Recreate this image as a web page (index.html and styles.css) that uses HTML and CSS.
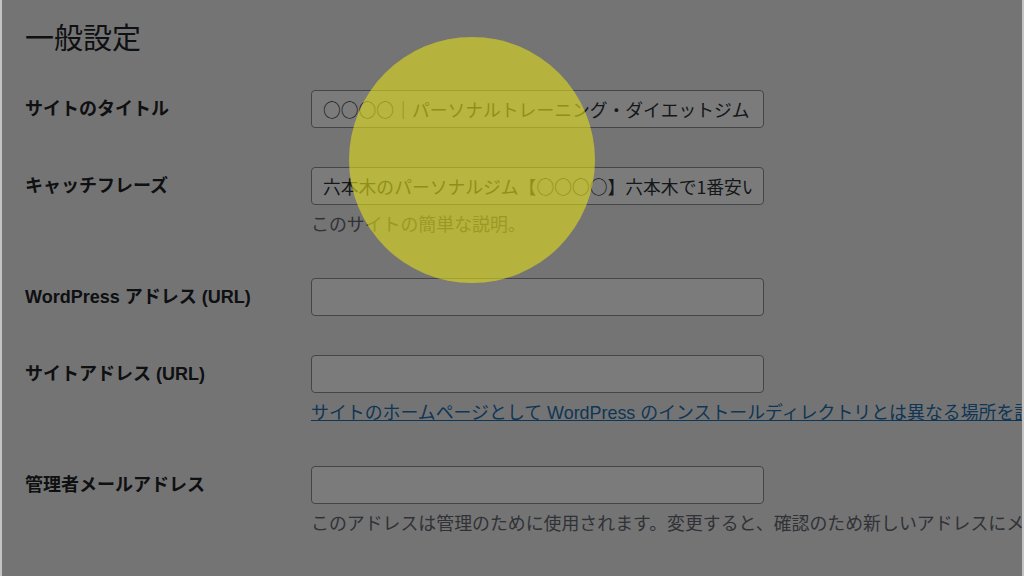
FILE: index.html
```html
<!DOCTYPE html>
<html lang="ja">

<head>
    <meta charset="UTF-8">
    <title>一般設定</title>
    <link rel="stylesheet" href="styles.css">
</head>

<body>
    <div class="frame">
        <div class="page">
            <h1>一般設定</h1>

            <div class="form-row">
                <label for="blogname">サイトのタイトル</label>
                <div class="field">
                    <input type="text" id="blogname" value="○○○○｜パーソナルトレーニング・ダイエットジム">
                </div>
            </div>

            <div class="form-row">
                <label for="blogdescription">キャッチフレーズ</label>
                <div class="field">
                    <input type="text" id="blogdescription" value="六本木のパーソナルジム【○○○○】六本木で1番安いパーソナルトレーニング">
                    <p class="description">このサイトの簡単な説明。</p>
                </div>
            </div>

            <div class="form-row">
                <label for="siteurl">WordPress アドレス (URL)</label>
                <div class="field">
                    <input type="url" id="siteurl">
                </div>
            </div>

            <div class="form-row">
                <label for="home">サイトアドレス (URL)</label>
                <div class="field">
                    <input type="url" id="home">
                    <p class="description"><a href="#">サイトのホームページとして WordPress のインストールディレクトリとは異なる場所を設定する場合は、ここにアドレスを入力してください。</a></p>
                </div>
            </div>

            <div class="form-row">
                <label for="admin_email">管理者メールアドレス</label>
                <div class="field">
                    <input type="email" id="admin_email">
                    <p class="description">このアドレスは管理のために使用されます。変更すると、確認のため新しいアドレスにメールを送信します。</p>
                </div>
            </div>
        </div>

        <!-- dimmed screen with highlight spot -->
        <div class="overlay"></div>
        <div class="spot"></div>
    </div>
</body>

</html>
```

FILE: styles.css
```css
html,
body {
    margin: 0;
    height: 100%;
}

body {
    background-color: #c4c4c4;
    font-family: "Liberation Sans", "Noto Sans CJK JP", sans-serif;
    color: #1d2327;
}

.frame {
    position: relative;
    margin: 0 2px;
    height: 576px;
    overflow: hidden;
    background-color: #f0f0f1;
}

.page {
    padding: 17px 0 0 23px;
}

h1 {
    margin: 0 0 16px;
    font-size: 29px;
    line-height: 38px;
    font-weight: normal;
    font-family: "Noto Sans CJK JP", sans-serif;
}

.form-row {
    display: grid;
    grid-template-columns: 286px 1fr;
    padding: 19px 0 20px;
}

.form-row label {
    font-size: 18px;
    font-weight: bold;
    line-height: 38px;
}

.field {
    min-width: 0;
}

input {
    box-sizing: border-box;
    width: 453px;
    height: 38px;
    padding: 0 11px;
    font-family: "Noto Sans CJK JP", sans-serif;
    font-size: 17.8px;
    color: #2c3338;
    background-color: #fff;
    border: 1px solid #8c8f94;
    border-radius: 4px;
    display: block;
}

.description {
    margin: 6px 0 0;
    font-size: 17.9px;
    line-height: 28px;
    color: #646970;
    white-space: nowrap;
}

.description a {
    color: #2271b1;
}

.overlay {
    position: absolute;
    inset: 0;
    background-color: rgba(0, 0, 0, 0.517);
}

.spot {
    position: absolute;
    left: 347px;
    top: 37px;
    width: 246px;
    height: 246px;
    border-radius: 50%;
    background-color: rgba(221, 216, 29, 0.62);
}
```
